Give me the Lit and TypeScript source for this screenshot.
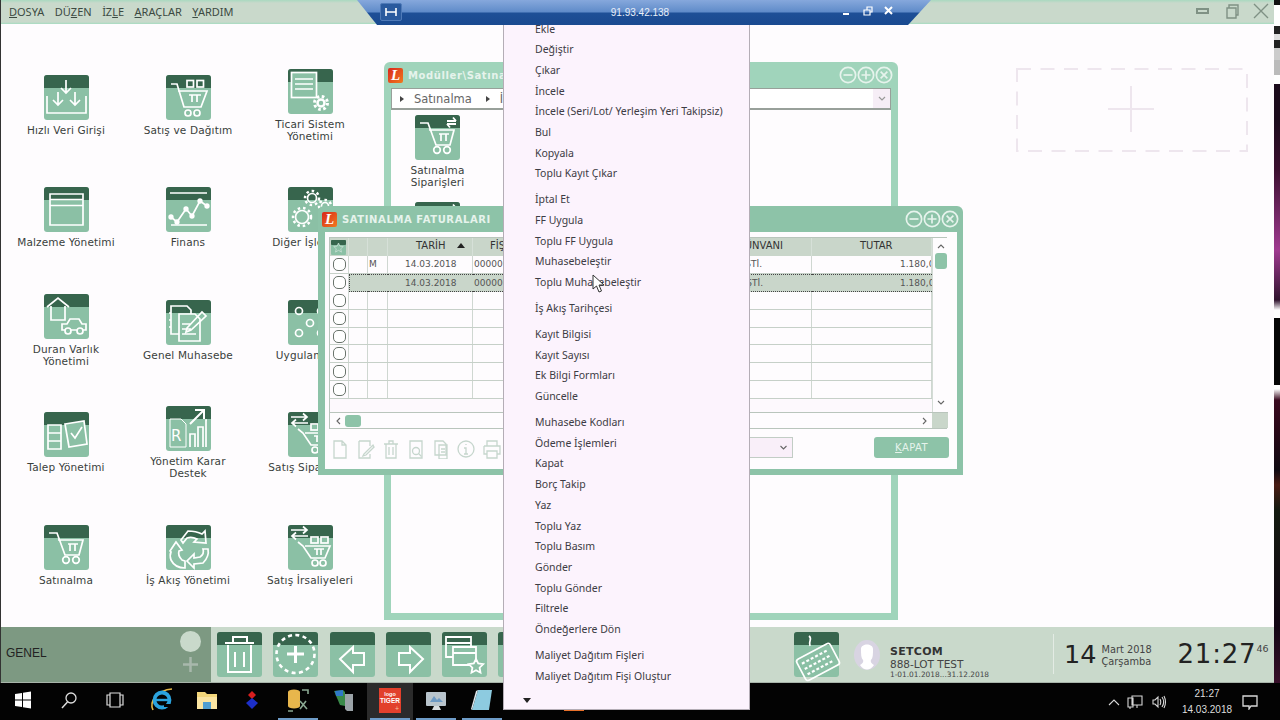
import { html, css, svg, LitElement } from 'lit';
import { customElement } from 'lit/decorators.js';

const BAND = '#37654d';
const BODY = '#8bc0a5';

const cartPlain = svg`
  <path d="M5 8h8l8 22h14l4-15H14" />
  <path d="M24 19h10M26 19v7M31 19v7" />
  <circle cx="22" cy="35" r="3.3" /><circle cx="32" cy="35" r="3.3" />`;

const cartBoxes = svg`
  <path d="M5 9h6l7 23h17l6-16H12" />
  <path d="M23 20h12M26 20v7M31 20v7" />
  <rect x="21" y="5.500" width="6.500" height="6.500" /><rect x="31" y="5.500" width="6.500" height="6.500" />
  <circle cx="22" cy="38" r="3" /><circle cx="31" cy="38" r="3" />`;

const swapArrows = svg`
  <path d="M3 5h16M15 1.500l4 3.500-4 3.500M20 11H4M8 7.500L4 11l4 3.500" />`;

const cartSwap = svg`
  ${swapArrows}
  <path d="M10 17l5 4 8 12h14l5-12H17" />
  <path d="M26 24h10M29 24v6M33 24v6" />
  <rect x="23" y="12" width="7" height="6" /><rect x="33" y="12" width="7" height="6" />
  <circle cx="27" cy="38" r="3" /><circle cx="35" cy="38" r="3" />`;

const gear = (x: number, y: number, r: number) => svg`
  <circle cx=${x} cy=${y} r=${r} />
  <circle cx=${x} cy=${y} r=${r + 2.5} stroke-width="2.500" stroke-dasharray="2.500 2.900" />`;

const glyphs = {
  down: svg`
    <path d="M22 5v13M17 13l5 5 5-5M14 17v13M9 25l5 5 5-5M31 17v13M26 25l5 5 5-5M3 21v17h39V21" />`,
  cartBoxes,
  cartPlain,
  cartSwap,
  doc: svg`
    <rect x="3.500" y="3.500" width="25" height="25" fill=${BODY} />
    <path d="M7 10h18M7 15h18M7 20h18" />
    <circle cx="33" cy="34" r="3.500" stroke-width="2.500" />
    <circle cx="33" cy="34" r="6.500" stroke-width="3" stroke-dasharray="2.600 2.500" />`,
  panel: svg`<path d="M6 7h33v31H6zM6 12.500h33M6 18.500h33" />`,
  chart: svg`
    <path d="M4 6h37M5 38h36" />
    <path d="M5 30l6 5 9-13 6 7 8-15 7 5" />
    <circle cx="5" cy="30" r="1.800" fill="#fff" /><circle cx="11" cy="35" r="1.800" fill="#fff" />
    <circle cx="20" cy="22" r="1.800" fill="#fff" /><circle cx="26" cy="29" r="1.800" fill="#fff" />
    <circle cx="34" cy="14" r="1.800" fill="#fff" /><circle cx="41" cy="19" r="1.800" fill="#fff" />`,
  gears: svg`
    ${gear(14, 30, 6.500)} ${gear(24, 11, 4.500)} ${gear(37, 19, 3.500)}`,
  asset: svg`
    <path d="M3 13L14 4l11 9M7 12v14h14V12" />
    <path d="M18 36v-6h5l3-5h9l3 5h4v6z" />
    <circle cx="24" cy="37" r="3" fill=${BODY} /><circle cx="36" cy="37" r="3" fill=${BODY} />`,
  ledger: svg`
    <path d="M5 6h16l4 4v24H5zM5 13H3M5 20H3M5 27H3" />
    <path d="M13 14h16l5 5v22H13z" fill=${BODY} />
    <path d="M16 24h9M16 29h9M16 34h14M21 28L36 12l4 4-15 14-5 2z" />`,
  circles: svg`
    <circle cx="11" cy="11" r="3.500" /><circle cx="22" cy="23" r="3.500" /><circle cx="11" cy="33" r="3.500" />
    <circle cx="33" cy="33" r="3.500" /><circle cx="33" cy="11" r="3.500" />`,
  request: svg`
    <path d="M4 13h13v24H4zM4 21h13M4 29h13" />
    <path d="M21 12l19-3 3 23-18 3z" fill=${BODY} />
    <path d="M27 21l4 5 7-11" />`,
  report: svg`
    <path d="M4 13h11l5 5v23H4z" stroke-width="1" />
    <text x="5" y="35" font-family="DejaVu Sans" font-size="15" fill="#fff" stroke="none">R</text>
    <path d="M24 41V28h5v13M32 41V21h5v20M40 41V14h1" />
    <path d="M24 18L37 5M29 4h9v9" stroke-width="2" />`,
  recycle: svg`
    <path d="M15 15l7-9c5 0 10 1 14 3l3-3 1 12-12-1 3-3c-4-2-7-2-10-1l-4 5z" />
    <path d="M4 26l6-9 6 8-3 1c-1 3 0 6 3 9l3 1v7c-6 0-11-2-14-8-1-3-1-6 0-8z" />
    <path d="M42 24c1 5-1 10-5 14l-9 1v4l-7-7 7-7v4l6-1c3-2 4-5 3-8z" />`,
  cartArrows: svg`
    ${cartPlain}
    <path d="M32 6h9M38 2.500l3 3.500M41 9h-9M35 12.500L32 9" stroke-width="1.800" />`,
  trash: svg`
    <path d="M8 11h29M16 11V5h14v6M11 13v27h23V13M18 20v15M27 20v15" stroke-width="2" />`,
  addRing: svg`
    <circle cx="22.500" cy="22" r="19" stroke-width="2.600" stroke-dasharray="4 3.400" />
    <path d="M14 22h17M22.500 14v17" stroke-width="3" />`,
  left: svg`<path d="M10 27l13-12v6h11v12H23v7z" stroke-width="2" />`,
  right: svg`<path d="M37 27L24 15v6H13v12h11v7z" stroke-width="2" />`,
  windows: svg`
    <path d="M4 5h25v20H4zM4 11h25" stroke-width="1.800" />
    <path d="M11 15h23v18H11zM11 21h23" stroke-width="1.800" fill=${BODY} />
    <path d="M34 27l2.200 4.500 5 .700-3.600 3.500.900 5-4.500-2.400-4.500 2.400.900-5-3.600-3.500 5-.700z" fill=${BODY} stroke-width="1.800" />`,
  keyboard: svg`
    <path d="M15 4c4 3-1 5 1 10" />
    <g transform="rotate(-28 24 30)">
      <rect x="5" y="18" width="38" height="24" rx="3" />
      <path d="M9 24h30M9 30h30M9 36h30" stroke-width="2.200" stroke-dasharray="3 2" />
    </g>`,
  stub: svg`<path d="M6 32h6v8H6" />`,
};

type GlyphName = keyof typeof glyphs;

const tile = (name: GlyphName) => html`
  <svg class="tile" viewBox="0 0 45 45">
    <rect width="45" height="45" rx="3" fill=${BODY} />
    <path d="M0 13V3a3 3 0 0 1 3-3h39a3 3 0 0 1 3 3v10z" fill=${BAND} />
    <g fill="none" stroke="#fff" stroke-width="1.700">${glyphs[name]}</g>
  </svg>
`;

const modules: [GlyphName, string][] = [
  ['down', 'Hızlı Veri Girişi'],
  ['cartBoxes', 'Satış ve Dağıtım'],
  ['doc', 'Ticari Sistem Yönetimi'],
  ['panel', 'Malzeme Yönetimi'],
  ['chart', 'Finans'],
  ['gears', 'Diğer İşlemler'],
  ['asset', 'Duran Varlık Yönetimi'],
  ['ledger', 'Genel Muhasebe'],
  ['circles', 'Uygulamalar'],
  ['request', 'Talep Yönetimi'],
  ['report', 'Yönetim Karar Destek'],
  ['cartSwap', 'Satış Siparişleri'],
  ['cartPlain', 'Satınalma'],
  ['recycle', 'İş Akış Yönetimi'],
  ['cartSwap', 'Satış İrsaliyeleri'],
];

const menuItems: (string | null)[] = [
  'Ekle', 'Değiştir', 'Çıkar', 'İncele', 'İncele (Seri/Lot/ Yerleşim Yeri Takipsiz)', 'Bul', 'Kopyala', 'Toplu Kayıt Çıkar',
  null,
  'İptal Et', 'FF Uygula', 'Toplu FF Uygula', 'Muhasebeleştir', 'Toplu Muhasebeleştir',
  null,
  'İş Akış Tarihçesi',
  null,
  'Kayıt Bilgisi', 'Kayıt Sayısı', 'Ek Bilgi Formları', 'Güncelle',
  null,
  'Muhasebe Kodları', 'Ödeme İşlemleri', 'Kapat', 'Borç Takip', 'Yaz', 'Toplu Yaz', 'Toplu Basım', 'Gönder', 'Toplu Gönder', 'Filtrele', 'Öndeğerlere Dön',
  null,
  'Maliyet Dağıtım Fişleri', 'Maliyet Dağıtım Fişi Oluştur',
];

const winButtons = html`
  <div class="win-btns">
    <svg viewBox="0 0 16 16"><circle cx="8" cy="8" r="6.800" /><path d="M4 8h8" /></svg>
    <svg viewBox="0 0 16 16"><circle cx="8" cy="8" r="6.800" /><path d="M4 8h8M8 4v8" /></svg>
    <svg viewBox="0 0 16 16"><circle cx="8" cy="8" r="6.800" /><path d="M5 5l6 6M11 5l-6 6" /></svg>
  </div>
`;

const toolIcons = [
  svg`<path d="M4 2h8l4 4v13H4zM12 2v4h4" />`,
  svg`<path d="M4 2h11v5M15 15v4H4V2M9 15l9-9 1 2-8 8-3 1z" />`,
  svg`<path d="M3 5h14M8 5V2h4v3M5 5v14h10V5M8 8v8M12 8v8" />`,
  svg`<path d="M4 2h12v17H4z" /><circle cx="10" cy="12" r="3.500" /><path d="M12.500 14.500l3 3" />`,
  svg`<path d="M4 2h8l3 3v11H4zM8 6h8v14H8zM10 10h4M10 13h4" />`,
  svg`<circle cx="10" cy="10" r="8" /><path d="M10 5v1M8 9h2v6M8 15h4" />`,
  svg`<path d="M5 7V2h10v5M2 7h16v8h-3M5 15H2V7M5 12h10v7H5z" />`,
];

@customElement('app-root')
export class AppRoot extends LitElement {
  static styles = css`
    :host {
      display: block;
      width: 1280px;
      height: 720px;
      overflow: hidden;
      font-family: 'DejaVu Sans', sans-serif;
      color: #333;
    }

    .screen {
      position: relative;
      width: 1280px;
      height: 720px;
      display: grid;
      grid-template-columns: 1fr 6px;
      grid-template-rows: 1fr 37px;
      overflow: hidden;
    }

    .app {
      display: flex;
      flex-direction: column;
      min-height: 0;
      border-left: 1px solid #333;
      background: #fefcfe;
    }

    .wall {
      background: linear-gradient(
        180deg,
        #111 0 5px,
        #fff 5px 26px,
        #222 26px 34px,
        #ddd 34px 40px,
        #222 40px 48px,
        #ccc 48px 60px,
        #bbb 60px 75px,
        #fff 75px 84px,
        #1c0c1c 84px 120px,
        #3c1030 170px,
        #a03a90 250px,
        #30142e 300px,
        #fff 310px 318px,
        #060606 318px 385px,
        #fff 385px 389px,
        #3a0a20 400px,
        #2a0818 430px,
        #100a12 470px,
        #4a1c14 485px,
        #141a10 510px,
        #120614 626px,
        #38102a 683px
      );
    }

    /* top menu */
    .menubar {
      height: 24px;
      flex: none;
      display: flex;
      align-items: center;
      gap: 10.500px;
      padding: 0 3px 2px 8px;
      box-sizing: border-box;
      background: linear-gradient(180deg, #a9d9c0 0, #c9d9cb 3px, #c9d9cb 22px, #a5dcc0 24px);
      font-family: 'Noto Sans', sans-serif;
      font-size: 11px;
      color: #3c4a42;
    }

    .menubar u {
      text-decoration-thickness: 1px;
    }

    .frame-btns {
      margin-left: auto;
      display: flex;
      align-items: center;
      gap: 9px;
    }

    .frame-btns svg {
      width: 20px;
      height: 20px;
      fill: none;
      stroke: #7f9184;
      stroke-width: 1.400;
    }

    /* desktop */
    .desktop {
      flex: 1;
      min-height: 0;
      padding: 25px 0 0 4px;
    }

    .modules {
      display: grid;
      grid-template-columns: repeat(3, 122px);
      grid-auto-rows: 112.500px;
    }

    .module {
      display: flex;
      flex-direction: column;
      align-items: center;
      justify-content: center;
      gap: 4px;
      text-align: center;
      font-size: 10.500px;
      line-height: 12px;
      letter-spacing: 0.150px;
      color: #3a3f3c;
    }

    .module span {
      max-width: 108px;
    }

    .tile {
      width: 45px;
      height: 45px;
      flex: none;
      overflow: visible;
    }

    .add-zone {
      position: absolute;
      left: 1016px;
      top: 68px;
      width: 232px;
      height: 84px;
      fill: none;
      stroke: #eee6ee;
      stroke-width: 2;
    }

    /* floating windows */
    .win {
      position: absolute;
      display: flex;
      flex-direction: column;
      box-sizing: border-box;
      border-radius: 6px 6px 0 0;
    }

    .win-modules {
      left: 384px;
      top: 62px;
      width: 514px;
      height: 558px;
      padding: 0 7px 7px;
      background: #a0d4bb;
    }

    .win-invoices {
      left: 318px;
      top: 206px;
      width: 645px;
      height: 269px;
      padding: 0 6px 6px 7px;
      background: #8dc3a8;
    }

    .win-title {
      height: 26px;
      flex: none;
      display: flex;
      align-items: center;
      gap: 5px;
      margin-left: -3px;
      font-size: 10px;
      font-weight: bold;
      letter-spacing: 0.600px;
      white-space: nowrap;
      color: #e6f3ec;
    }

    .logo {
      width: 15px;
      height: 15px;
      flex: none;
      display: flex;
      align-items: center;
      justify-content: center;
      border-radius: 2px;
      background: linear-gradient(135deg, #d9261c, #f07a1e);
      font-family: 'Liberation Serif', serif;
      font-size: 15px;
      font-style: italic;
      font-weight: bold;
      letter-spacing: 0;
      color: #fff;
    }

    .win-btns {
      margin-left: auto;
      margin-right: -1.500px;
      display: flex;
    }

    .win-btns svg {
      width: 18px;
      height: 18px;
      fill: none;
      stroke: #e6f3ec;
      stroke-width: 1.500;
    }

    .win-body {
      flex: 1;
      min-height: 0;
      background: #fefcfe;
    }

    .crumbs {
      height: 22px;
      box-sizing: border-box;
      display: flex;
      align-items: center;
      gap: 8px;
      padding-left: 8px;
      border: 1px solid #98a09a;
      border-width: 1px 1px 2px;
      background: #fff;
      font-size: 11.500px;
      color: #666;
    }

    .crumb-arrow {
      width: 0;
      height: 0;
      border-left: 4px solid #444;
      border-top: 3.500px solid transparent;
      border-bottom: 3.500px solid transparent;
      margin-right: 2px;
    }

    .crumb-drop {
      margin-left: auto;
      width: 17px;
      height: 100%;
      display: flex;
      align-items: center;
      justify-content: center;
      background: #f6eef6;
    }

    .crumb-drop svg {
      width: 8px;
      height: 6px;
      fill: none;
      stroke: #999;
      stroke-width: 1.200;
    }

    .sub-modules {
      display: flex;
      flex-direction: column;
      align-items: flex-start;
      gap: 4px;
      padding: 5px 0 0 24px;
    }

    .sub-module {
      width: 45px;
      display: flex;
      flex-direction: column;
      align-items: center;
      gap: 4px;
      font-size: 10.500px;
      line-height: 12px;
      letter-spacing: 0.150px;
      text-align: center;
      color: #3a3f3c;
    }

    .sub-module span {
      white-space: nowrap;
      margin-bottom: 10px;
    }

    /* invoice grid */
    .invoices-body {
      display: flex;
      flex-direction: column;
      padding: 5px 10px 0 4px;
    }

    .table {
      height: 192px;
      flex: none;
      box-sizing: border-box;
      display: grid;
      grid-template-columns: 602px 16px;
      grid-template-rows: 174px 16px;
      border: 1px solid #b9c5bc;
      font-size: 9px;
      color: #555;
    }

    .rows {
      overflow: hidden;
      background: #fdf9fd;
    }

    .row {
      display: grid;
      grid-template-columns: 19px 19px 20px 85px 128px 211px 120px;
      height: 17.900px;
      box-sizing: border-box;
      border-bottom: 1px solid #c6d0c8;
      background: #fefcfe;
    }

    .row > div {
      display: flex;
      align-items: center;
      overflow: hidden;
      white-space: nowrap;
      border-right: 1px solid #cfd7d1;
    }

    .row.head {
      height: 18px;
      background: #c9d6ca;
      font-size: 10px;
      color: #333;
      border-bottom: 0;
    }

    .row.head > div {
      box-sizing: border-box;
      padding-bottom: 3px;
      border-right-color: #d6e0d8;
    }

    .row.selected > div:not(:first-child) {
      background: #c9d6ca;
      border-right: 0;
      border-top: 1px dotted #444;
      border-bottom: 1px dotted #444;
    }

    .row.selected > div:nth-child(2) {
      border-left: 1px dotted #444;
    }

    .row.selected {
      border-bottom: 0;
    }

    .star {
      width: 15px;
      height: 15px;
      margin: 3px 0 0 1px;
    }

    .check {
      width: 13px;
      height: 13px;
      margin-left: 3px;
      flex: none;
      box-sizing: border-box;
      border: 1.200px solid #6a746c;
      border-radius: 5px;
      background: #fff;
    }

    .mark {
      padding-left: 1px;
    }

    .date {
      padding-left: 17px;
    }

    .head .date {
      padding-left: 28px;
      gap: 11px;
    }

    .sort {
      width: 0;
      height: 0;
      border-left: 4.500px solid transparent;
      border-right: 4.500px solid transparent;
      border-bottom: 5px solid #222;
    }

    .head .fis {
      padding-left: 17px;
    }

    .fis {
      padding-left: 1px;
    }

    .title-col {
      justify-content: flex-end;
      padding-right: 49px;
    }

    .head .title-col {
      padding-right: 28px;
    }

    .amount {
      padding-left: 88px;
    }

    .head .amount {
      padding-left: 48px;
    }

    .vscroll {
      display: flex;
      flex-direction: column;
      align-items: center;
      border-left: 1px solid #d4dcd6;
      background: #fefcfe;
    }

    .vscroll .thumb {
      width: 12px;
      height: 16px;
      margin-top: 4px;
      border-radius: 3px;
      background: #8dc3a8;
    }

    .vscroll .chev {
      margin-top: 5px;
    }

    .vscroll .chev:last-child {
      margin-top: auto;
      margin-bottom: 6px;
    }

    .chev {
      width: 8px;
      height: 6px;
      flex: none;
      fill: none;
      stroke: #666;
      stroke-width: 1.100;
    }

    .hscroll {
      display: flex;
      align-items: center;
      gap: 4px;
      padding: 0 4px 0 5px;
      border-top: 1px solid #b9c5bc;
      background: #fefcfe;
    }

    .hscroll .thumb {
      width: 16px;
      height: 12px;
      border-radius: 3px;
      background: #8dc3a8;
    }

    .hscroll .chev {
      width: 6px;
      height: 8px;
    }

    .hscroll .chev:last-child {
      margin-left: auto;
    }

    .corner {
      background: #c9d6ca;
      border-top: 1px solid #b9c5bc;
    }

    .tools {
      flex: 1;
      display: flex;
      align-items: center;
      padding-left: 1px;
    }

    .tool {
      width: 20px;
      height: 20px;
      margin-right: 5.300px;
      flex: none;
      fill: none;
      stroke: #c6d6cd;
      stroke-width: 1.300;
    }

    .combo {
      margin-left: auto;
      margin-bottom: 3px;
      width: 150px;
      height: 21px;
      box-sizing: border-box;
      display: flex;
      align-items: center;
      justify-content: flex-end;
      padding-right: 4px;
      border: 1px solid #c2cdc5;
      background: #f9eff9;
    }

    .combo .chev {
      width: 9px;
    }

    .close-btn {
      margin: 0 -2px 3px 81px;
      width: 75px;
      height: 21px;
      flex: none;
      display: flex;
      align-items: center;
      justify-content: center;
      border-radius: 3px;
      background: #8dc3a8;
      font-size: 10px;
      letter-spacing: 0.400px;
      color: #e6f3ec;
    }

    /* bottom strip */
    .dock {
      height: 56px;
      flex: none;
      display: flex;
      align-items: stretch;
      border-bottom: 1px solid #a8b4aa;
      box-sizing: border-box;
      background: #c9d9cb;
    }

    .dock-label {
      width: 210px;
      flex: none;
      box-sizing: border-box;
      display: flex;
      align-items: center;
      padding: 0 0 3px 5px;
      background: #7d9982;
      font-family: 'Liberation Sans', sans-serif;
      font-size: 12px;
      color: #222;
    }

    .dock-knob {
      margin-left: auto;
      margin-right: 10px;
      margin-bottom: 3px;
      display: flex;
      flex-direction: column;
      align-items: center;
      gap: 5px;
    }

    .knob {
      width: 21px;
      height: 21px;
      border-radius: 50%;
      background: #c9d9cb;
    }

    .knob-plus {
      width: 15px;
      height: 15px;
      fill: none;
      stroke: #a8b8ac;
      stroke-width: 2.500;
    }

    .dock-tiles {
      display: flex;
      align-items: center;
      gap: 11.300px;
      padding-left: 6px;
      width: 578px;
      flex: none;
      box-sizing: border-box;
    }

    .account {
      display: flex;
      align-items: center;
      margin-left: 5px;
    }

    .avatar {
      width: 26px;
      height: 30px;
      margin: 0 10px 0 15px;
      flex: none;
    }

    .account-text {
      width: 163px;
      flex: none;
      display: flex;
      flex-direction: column;
      padding-top: 14px;
      color: #444;
    }

    .account-text b {
      font-size: 11px;
      letter-spacing: 0.300px;
      line-height: 13px;
      color: #333;
    }

    .account-text span {
      font-size: 10.500px;
      line-height: 13px;
    }

    .account-text small {
      font-size: 7.400px;
      line-height: 8px;
    }

    .clock {
      flex: 1;
      display: flex;
      align-items: center;
      border-left: 1px solid #e3ebe4;
      margin: 7px 0 8px;
      padding-left: 10px;
      color: #222;
    }

    .day {
      font-size: 25.500px;
      margin-right: 5px;
    }

    .date-text {
      width: 76px;
      flex: none;
      padding-top: 3px;
      font-size: 9.800px;
      line-height: 12px;
      color: #444;
    }

    .time {
      font-size: 26px;
      letter-spacing: 0.800px;
      white-space: nowrap;
    }

    .time sup {
      font-size: 9.500px;
      letter-spacing: 0;
      vertical-align: 11px;
      line-height: 0;
      color: #444;
    }

    /* windows taskbar */
    .taskbar {
      grid-column: 1 / 3;
      display: flex;
      align-items: stretch;
      background: #030303;
      color: #ddd;
    }

    .task {
      width: 45.900px;
      flex: none;
      display: flex;
      align-items: center;
      justify-content: center;
      box-sizing: border-box;
      padding-bottom: 3px;
    }

    .task svg {
      width: 26px;
      height: 26px;
    }

    .task.open {
      background: linear-gradient(#6e9cc8, #6e9cc8) bottom center / 40px 2px no-repeat;
    }

    .task.open.active {
      background: linear-gradient(#6e9cc8, #6e9cc8) bottom center / 40px 2px no-repeat, #2b2b2b;
    }

    .tray {
      margin-left: auto;
      display: flex;
      align-items: center;
      padding-right: 22px;
    }

    .tray svg {
      fill: none;
      stroke: #d8d8d8;
      stroke-width: 1.100;
    }

    .tray-net {
      margin-left: 7px;
    }

    .tray-sound {
      margin-left: 8px;
    }

    .tray-clock {
      width: 52px;
      margin: 0 9px 0 14px;
      text-align: center;
      font-family: 'Liberation Sans', sans-serif;
      font-size: 10px;
      line-height: 16px;
    }

    /* remote desktop connection bar */
    .rdp {
      position: absolute;
      left: 357px;
      top: 0;
      width: 574px;
      height: 25px;
      box-sizing: border-box;
      padding-right: 8px;
      display: flex;
      align-items: center;
      justify-content: center;
      clip-path: polygon(0 0, 100% 0, 96% 100%, 3.500% 100%);
      background: linear-gradient(180deg, #86a8dc 0, #5f8bc9 12px, #1e4f97 13px, #1a4a90 25px);
      font-family: 'Liberation Sans', sans-serif;
      font-size: 10px;
      color: #e8eef8;
    }

    .rdp-pin {
      position: absolute;
      left: 23px;
      top: 3px;
      width: 22px;
      height: 18px;
      border-radius: 2px;
      background: #2a5a9e;
      border: 1px solid #4f7ab8;
      box-sizing: border-box;
      fill: none;
      stroke: #fff;
      stroke-width: 1.600;
    }

    .rdp-ctrls {
      position: absolute;
      left: 485px;
      top: 6px;
      display: flex;
      gap: 11px;
    }

    .rdp-ctrls svg {
      width: 10px;
      height: 10px;
      fill: none;
      stroke: #fff;
      stroke-width: 1.600;
    }

    /* context menu */
    .menu {
      position: absolute;
      left: 503px;
      top: 25px;
      width: 247px;
      height: 685px;
      box-sizing: border-box;
      overflow: hidden;
      display: flex;
      flex-direction: column;
      border: 1px solid #b4adb6;
      border-top: 0;
      background: #fcf3fd;
      font-family: 'Noto Sans', sans-serif;
      font-size: 10.500px;
      color: #3c3c44;
    }

    .menu-list {
      flex: none;
      margin-top: -6.800px;
    }

    .item {
      height: 20.700px;
      display: flex;
      align-items: center;
      padding-left: 31px;
      white-space: nowrap;
    }

    .sep {
      height: 5.300px;
    }

    .menu-more {
      flex: 1;
      display: flex;
      align-items: center;
      padding: 6px 0 0 19px;
    }

    .menu-more i {
      width: 0;
      height: 0;
      border-left: 4.500px solid transparent;
      border-right: 4.500px solid transparent;
      border-top: 5px solid #222;
    }

    .pointer {
      position: absolute;
      left: 592px;
      top: 274px;
      width: 13px;
      height: 20px;
      fill: #fff;
      stroke: #333;
      stroke-width: 1;
    }
  `;

  private renderRow(index: number) {
    const filled = index < 2;
    return html`
      <div class="row ${index === 1 ? 'selected' : ''}">
        <div><span class="check"></span></div>
        <div></div>
        <div class="mark">${index === 0 ? 'M' : ''}</div>
        <div class="date">${filled ? '14.03.2018' : ''}</div>
        <div class="fis">${filled ? '00000001' : ''}</div>
        <div class="title-col">${filled ? 'TİCARET LTD. ŞTİ.' : ''}</div>
        <div class="amount">${filled ? '1.180,00' : ''}</div>
      </div>
    `;
  }

  render() {
    return html`
      <div class="screen">
        <div class="app">
          <div class="menubar">
            <span><u>D</u>OSYA</span>
            <span>DÜ<u>Z</u>EN</span>
            <span>İZ<u>L</u>E</span>
            <span><u>A</u>RAÇLAR</span>
            <span><u>Y</u>ARDIM</span>
            <div class="frame-btns">
              <svg viewBox="0 0 20 20"><rect x="4" y="8" width="11" height="4" stroke-width="2" /></svg>
              <svg viewBox="0 0 20 20"><path d="M5 7h9v10H5zM7 7V4h9v10h-2" /></svg>
              <svg viewBox="0 0 20 20"><path d="M3 3l14 14M17 3L3 17" /></svg>
            </div>
          </div>

          <div class="desktop">
            <div class="modules">
              ${modules.map(
                ([icon, label]) => html`<div class="module">${tile(icon)}<span>${label}</span></div>`
              )}
            </div>
          </div>

          <div class="dock">
            <div class="dock-label">
              GENEL
              <div class="dock-knob">
                <div class="knob"></div>
                <svg class="knob-plus" viewBox="0 0 15 15"><path d="M7.500 0v15M0 7.500h15" /></svg>
              </div>
            </div>
            <div class="dock-tiles">
              ${tile('trash')} ${tile('addRing')} ${tile('left')} ${tile('right')} ${tile('windows')} ${tile('stub')}
            </div>
            <div class="account">
              ${tile('keyboard')}
              <svg class="avatar" viewBox="0 0 26 30">
                <ellipse cx="13" cy="15" rx="13" ry="15" fill="#d8d4e2" />
                <path d="M7 9c0-6 12-6 12 0 0 5 0 9-2 11-1 2 1 4 3 5-4 6-10 6-14 0 2-1 4-3 3-5-2-2-2-6-2-11z" fill="#fff" />
              </svg>
              <div class="account-text">
                <b>SETCOM</b>
                <span>888-LOT TEST</span>
                <small>1-01.01.2018...31.12.2018</small>
              </div>
            </div>
            <div class="clock">
              <span class="day">14</span>
              <div class="date-text">Mart 2018<br />Çarşamba</div>
              <span class="time">21:27<sup>46</sup></span>
            </div>
          </div>
        </div>

        <div class="wall"></div>

        <div class="taskbar">
          <div class="task">
            <svg viewBox="0 0 26 26"><path fill="#fff" d="M5 7l7-1v6.500H5zM13 5.800l8-1.200v7.900h-8zM5 13.500h7V20l-7-1zM13 13.500h8v7.900l-8-1.200z" /></svg>
          </div>
          <div class="task">
            <svg viewBox="0 0 26 26"><circle cx="15" cy="11" r="5" fill="none" stroke="#ddd" stroke-width="1.300" /><path d="M11.500 15L6 21" stroke="#ddd" stroke-width="1.500" /></svg>
          </div>
          <div class="task">
            <svg viewBox="0 0 26 26"><path fill="none" stroke="#ddd" stroke-width="1.200" d="M8 6h10v14H8zM8 8H5v10h3M18 8h3v10h-3" /></svg>
          </div>
          <div class="task">
            <svg viewBox="0 0 26 26">
              <path d="M5 23C1 15 9 3 24 2" fill="none" stroke="#e5b84a" stroke-width="1.600" />
              <circle cx="14" cy="13" r="7.500" fill="none" stroke="#2ba3de" stroke-width="3.800" />
              <path d="M8 13h12" stroke="#2ba3de" stroke-width="2.400" />
              <path d="M16 17h8v3h-8z" fill="#030303" />
            </svg>
          </div>
          <div class="task">
            <svg viewBox="0 0 26 26">
              <path d="M3 5h8l2 2h10v15H3z" fill="#f3d67a" />
              <path d="M3 10h20v12H3z" fill="#fbe5a2" />
              <path d="M9 15h8v7H9z" fill="#4f9ed2" />
            </svg>
          </div>
          <div class="task">
            <svg viewBox="0 0 26 26">
              <path d="M13 4l4 4-4 4-4-4z" fill="#d81e1e" />
              <path d="M13 11l6 5-6 6-6-6z" fill="#1c2fc8" />
            </svg>
          </div>
          <div class="task open">
            <svg viewBox="0 0 26 26">
              <path d="M3 5a6 2.500 0 0 1 12 0v14a6 2.500 0 0 1-12 0z" fill="#e8b64c" />
              <path d="M17 3h6v4M3 24h5M21 14l-6 8M15 14l7 8" fill="none" stroke="#8aa892" stroke-width="1.600" />
            </svg>
          </div>
          <div class="task">
            <svg viewBox="0 0 26 26">
              <path d="M3 4l9-1 2 2v14l-5-1z" fill="#3a8a4a" />
              <path d="M4 4l8-1v6H5z" fill="#2f78c8" />
              <path d="M14 7h8v17h-6l-2-2z" fill="#9ba3a8" />
            </svg>
          </div>
          <div class="task open active">
            <svg viewBox="0 0 26 26">
              <rect x="2" y="1" width="22" height="25" fill="#e2402c" />
              <text x="13" y="9" text-anchor="middle" font-family="Liberation Sans" font-size="5.500" font-weight="bold" fill="#fff">logo</text>
              <text x="13" y="16" text-anchor="middle" font-family="Liberation Sans" font-size="6.500" font-weight="bold" fill="#fff">TIGER</text>
              <text x="20" y="24" text-anchor="middle" font-family="Liberation Sans" font-size="7" fill="#f4c0a0">+</text>
            </svg>
          </div>
          <div class="task open">
            <svg viewBox="0 0 26 26">
              <rect x="3" y="5" width="20" height="14" rx="1" fill="#b8c4cc" />
              <path d="M7 15l4-6 3 4 2-2 4 4z" fill="#6d9ac4" />
              <path d="M11 19h5l2 4H9z" fill="#d8dde0" />
            </svg>
          </div>
          <div class="task open">
            <svg viewBox="0 0 26 26">
              <path d="M9 3h14l-3 20H3z" fill="#8dcbe0" />
              <path d="M9 3L3 23l-1-1 5-18z" fill="#dfe8ec" />
            </svg>
          </div>
          <div class="task"></div>
          <div class="task">
            <svg viewBox="0 0 26 26"><rect x="3" y="2" width="20" height="22" fill="#e8702a" /></svg>
          </div>
          <div class="tray">
            <svg width="12" height="8" viewBox="0 0 12 8"><path d="M1 7l5-5 5 5" /></svg>
            <svg class="tray-net" width="16" height="16" viewBox="0 0 16 16"><path d="M5 2h10v9H5zM1 4h5v9H1zM3 13v2M10 11v3" /></svg>
            <svg class="tray-sound" width="16" height="16" viewBox="0 0 16 16"><path d="M2 6h2l3-3v10L4 10H2zM9 5c1 2 1 4 0 6M11 3c2 3 2 7 0 10M13 2c2 4 2 8 0 12" /></svg>
            <div class="tray-clock">21:27<br />14.03.2018</div>
            <svg width="16" height="16" viewBox="0 0 16 16"><path d="M1 2h14v10H9l-2 3v-3H1z" stroke-width="1.300" /></svg>
          </div>
        </div>

        <svg class="add-zone" viewBox="0 0 232 84">
          <rect x="1" y="1" width="230" height="82" stroke-dasharray="14 9.500" />
          <path d="M92 41h46M115 18v46" />
        </svg>

        <section class="win win-modules">
          <div class="win-title">
            <span class="logo">L</span>
            Modüller\\Satınalma
            ${winButtons}
          </div>
          <div class="win-body">
            <div class="crumbs">
              <span class="crumb-arrow"></span>Satınalma
              <span class="crumb-arrow" style="margin-left:6px"></span>İşlemler
              <div class="crumb-drop"><svg viewBox="0 0 8 6"><path d="M1 1l3 3 3-3" /></svg></div>
            </div>
            <div class="sub-modules">
              <div class="sub-module">${tile('cartArrows')}<span>Satınalma<br />Siparişleri</span></div>
              <div class="sub-module">${tile('cartArrows')}</div>
            </div>
          </div>
        </section>

        <section class="win win-invoices">
          <div class="win-title">
            <span class="logo">L</span>
            SATINALMA FATURALARI
            ${winButtons}
          </div>
          <div class="win-body invoices-body">
            <div class="table">
              <div class="rows">
                <div class="row head">
                  <div>
                    <svg class="star" viewBox="0 0 15 15">
                      <rect width="15" height="15" rx="1" fill=${BODY} />
                      <rect width="15" height="5" rx="1" fill=${BAND} />
                      <path d="M7.500 3l1.400 3.200 3.400.300-2.600 2.300.800 3.300-3-1.800-3 1.800.800-3.300L2.700 6.500l3.400-.300z" fill=${BODY} stroke="#c9e0d4" stroke-width="0.800" />
                    </svg>
                  </div>
                  <div></div>
                  <div></div>
                  <div class="date">TARİH<i class="sort"></i></div>
                  <div class="fis">FİŞ NO</div>
                  <div class="title-col">CARİ HESAP ÜNVANI</div>
                  <div class="amount">TUTAR</div>
                </div>
                ${[0, 1, 2, 3, 4, 5, 6, 7].map((i) => this.renderRow(i))}
              </div>
              <div class="vscroll">
                <svg class="chev" viewBox="0 0 8 6"><path d="M1 5l3-3 3 3" /></svg>
                <div class="thumb"></div>
                <svg class="chev" viewBox="0 0 8 6"><path d="M1 1l3 3 3-3" /></svg>
              </div>
              <div class="hscroll">
                <svg class="chev" viewBox="0 0 6 8"><path d="M5 1L2 4l3 3" /></svg>
                <div class="thumb"></div>
                <svg class="chev" viewBox="0 0 6 8"><path d="M1 1l3 3-3 3" /></svg>
              </div>
              <div class="corner"></div>
            </div>
            <div class="tools">
              ${toolIcons.map((p) => html`<svg class="tool" viewBox="0 0 20 20">${p}</svg>`)}
              <div class="combo"><svg class="chev" viewBox="0 0 8 6"><path d="M1 1l3 3 3-3" /></svg></div>
              <div class="close-btn"><span><u>K</u>APAT</span></div>
            </div>
          </div>
        </section>

        <div class="rdp">
          <svg class="rdp-pin" viewBox="0 0 20 16"><path d="M5 4v8M15 4v8M5 8h10" /></svg>
          91.93.42.138
          <div class="rdp-ctrls">
            <svg viewBox="0 0 10 10"><path d="M1 8h6" stroke-width="2" /></svg>
            <svg viewBox="0 0 10 10"><path d="M1 4h6v5H1zM4 4V1h5v5H7" stroke-width="1.200" /></svg>
            <svg viewBox="0 0 10 10"><path d="M1 1l7 7M8 1L1 8" stroke-width="2" /></svg>
          </div>
        </div>

        <div class="menu">
          <div class="menu-list">
            ${menuItems.map((m) => (m === null ? html`<div class="sep"></div>` : html`<div class="item">${m}</div>`))}
          </div>
          <div class="menu-more"><i></i></div>
        </div>

        <svg class="pointer" viewBox="0 0 13 20"><path d="M1 1v14l3.500-3 2.500 6 2.500-1-2.500-6h5z" /></svg>
      </div>
    `;
  }
}

declare global {
  interface HTMLElementTagNameMap {
    'app-root': AppRoot;
  }
}
